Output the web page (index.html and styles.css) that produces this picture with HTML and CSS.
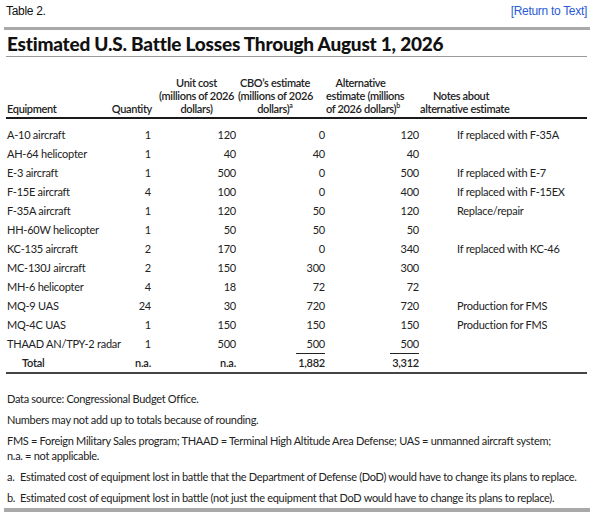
FILE: index.html
```html
<!DOCTYPE html>
<html lang="en">
<head>
<meta charset="utf-8">
<title>Table 2</title>
<link rel="stylesheet" href="styles.css">
</head>
<body>
<div class="page">
  <div class="topbar">
    <span class="label">Table 2.</span>
    <a class="return" href="#">[Return to Text]</a>
  </div>
  <div class="rule"></div>
  <h1 class="title">Estimated U.S. Battle Losses Through August 1, 2026</h1>
  <div class="title-line"></div>
  <table class="losses">
    <colgroup>
      <col class="c-equip">
      <col class="c-qty">
      <col class="c-unit">
      <col class="c-cbo">
      <col class="c-alt">
      <col class="c-notes">
    </colgroup>
    <thead>
      <tr>
        <th class="h-equip">Equipment</th>
        <th class="h-qty">Quantity</th>
        <th class="h-unit">Unit cost<br>(millions of 2026<br>dollars)</th>
        <th class="h-cbo">CBO’s estimate<br>(millions of 2026<br>dollars)<sup>a</sup></th>
        <th class="h-alt">Alternative<br>estimate (millions<br>of 2026 dollars)<sup>b</sup></th>
        <th class="h-notes">Notes about<br>alternative estimate</th>
      </tr>
    </thead>
    <tbody>
      <tr class="first"><td>A-10 aircraft</td><td class="num q">1</td><td class="num u">120</td><td class="num c">0</td><td class="num a">120</td><td class="note">If replaced with F-35A</td></tr>
      <tr><td>AH-64 helicopter</td><td class="num q">1</td><td class="num u">40</td><td class="num c">40</td><td class="num a">40</td><td class="note"></td></tr>
      <tr><td>E-3 aircraft</td><td class="num q">1</td><td class="num u">500</td><td class="num c">0</td><td class="num a">500</td><td class="note">If replaced with E-7</td></tr>
      <tr><td>F-15E aircraft</td><td class="num q">4</td><td class="num u">100</td><td class="num c">0</td><td class="num a">400</td><td class="note">If replaced with F-15EX</td></tr>
      <tr><td>F-35A aircraft</td><td class="num q">1</td><td class="num u">120</td><td class="num c">50</td><td class="num a">120</td><td class="note">Replace/repair</td></tr>
      <tr><td>HH-60W helicopter</td><td class="num q">1</td><td class="num u">50</td><td class="num c">50</td><td class="num a">50</td><td class="note"></td></tr>
      <tr><td>KC-135 aircraft</td><td class="num q">2</td><td class="num u">170</td><td class="num c">0</td><td class="num a">340</td><td class="note">If replaced with KC-46</td></tr>
      <tr><td>MC-130J aircraft</td><td class="num q">2</td><td class="num u">150</td><td class="num c">300</td><td class="num a">300</td><td class="note"></td></tr>
      <tr><td>MH-6 helicopter</td><td class="num q">4</td><td class="num u">18</td><td class="num c">72</td><td class="num a">72</td><td class="note"></td></tr>
      <tr><td>MQ-9 UAS</td><td class="num q">24</td><td class="num u">30</td><td class="num c">720</td><td class="num a">720</td><td class="note">Production for FMS</td></tr>
      <tr><td>MQ-4C UAS</td><td class="num q">1</td><td class="num u">150</td><td class="num c">150</td><td class="num a">150</td><td class="note">Production for FMS</td></tr>
      <tr><td>THAAD AN/TPY-2 radar</td><td class="num q">1</td><td class="num u">500</td><td class="num c">500</td><td class="num a">500</td><td class="note"></td></tr>
      <tr class="total"><td class="total-label">Total</td><td class="num q">n.a.</td><td class="num u">n.a.</td><td class="num c"><span class="sum">1,882</span></td><td class="num a"><span class="sum">3,312</span></td><td class="note"></td></tr>
    </tbody>
  </table>
  <div class="notes">
    <p>Data source: Congressional Budget Office.</p>
    <p>Numbers may not add up to totals because of rounding.</p>
    <p>FMS = Foreign Military Sales program; THAAD = Terminal High Altitude Area Defense; UAS = unmanned aircraft system;<br>n.a. = not applicable.</p>
    <p class="fn"><span class="mark">a.</span><span>Estimated cost of equipment lost in battle that the Department of Defense (DoD) would have to change its plans to replace.</span></p>
    <p class="fn"><span class="mark">b.</span><span>Estimated cost of equipment lost in battle (not just the equipment that DoD would have to change its plans to replace).</span></p>
  </div>
  <div class="bottom-bar"></div>
</div>
</body>
</html>
```

FILE: styles.css
```css
html, body {
  margin: 0;
  padding: 0;
  background: #ffffff;
}

.page {
  width: 593px;
  height: 513px;
  overflow: hidden;
  font-family: Lato, "Noto Sans", sans-serif;
  color: #222222;
}

.topbar {
  display: flex;
  justify-content: space-between;
  align-items: center;
  padding: 4px 6px 0 6px;
  height: 14px;
  font-family: "Liberation Sans", Arial, sans-serif;
  font-size: 12px;
  line-height: 14px;
  letter-spacing: -0.3px;
}

.label {
  color: #111111;
}

.return {
  color: #2a5bd7;
  text-decoration: none;
}

.rule {
  margin: 9px 3px 0 4px;
  height: 3px;
  background: #a9a9a9;
}

.title {
  margin: 3px 0 0 7px;
  font-family: Lato, "Noto Sans", sans-serif;
  font-weight: 900;
  font-size: 19px;
  line-height: 22px;
  color: #111111;
  letter-spacing: -0.22px;
  white-space: nowrap;
}

.title-line {
  margin: 1px 6px 0 6px;
  height: 1px;
  background: #9a9a9a;
}

.losses {
  margin: 19px 6px 0 6px;
  width: 581px;
  border-collapse: collapse;
  table-layout: fixed;
  font-size: 11px;
  letter-spacing: -0.25px;
}

.c-equip { width: 104px; }
.c-qty { width: 45px; }
.c-unit { width: 83px; }
.c-cbo { width: 88px; }
.c-alt { width: 94px; }
.c-notes { width: 167px; }

.losses th {
  font-weight: 600;
  line-height: 13px;
  vertical-align: bottom;
  padding: 0 0 2px 0;
  border-bottom: 2px solid #1a1a1a;
  white-space: nowrap;
  letter-spacing: -0.35px;
}

.losses sup {
  font-size: 7px;
  font-weight: 600;
  vertical-align: top;
  line-height: 7px;
  letter-spacing: 0;
}

.h-equip { text-align: left; padding-left: 1px !important; }
.h-qty { text-align: right; padding-right: 3px !important; }
.h-unit { text-align: center; }
.h-cbo { text-align: center; padding-right: 14px !important; }
.h-alt { text-align: center; padding-left: 0 !important; padding-right: 25px !important; }
.h-notes { text-align: center; padding-right: 85px !important; }

.losses td {
  line-height: 19px;
  padding: 0;
  white-space: nowrap;
}

.losses td:first-child {
  padding-left: 1px;
}

.losses tr.first td {
  padding-top: 6px;
}

.num { text-align: right; }
.q { padding-right: 4px !important; }
.u { padding-right: 2px !important; }
.c { padding-right: 1px !important; }
.a { padding-right: 1px !important; }
.note { padding-left: 37px !important; }

.total td {
  font-weight: 600;
  border-bottom: 2px solid #444444;
  line-height: 18px;
}

.losses td.total-label {
  padding-left: 16px;
}

.sum {
  display: inline-block;
  border-top: 1px solid #222222;
  padding-left: 2px;
  line-height: 17px;
}

.notes {
  margin: 17px 6px 0 7px;
  font-size: 11px;
  line-height: 15px;
  letter-spacing: -0.3px;
}

.notes p {
  margin: 0 0 6px 0;
  white-space: nowrap;
}

.fn {
  display: flex;
}

.mark {
  width: 13px;
  flex: none;
}

.bottom-bar {
  margin: -3px 3px 0 4px;
  height: 4px;
  background: #a9a9a9;
}
```
